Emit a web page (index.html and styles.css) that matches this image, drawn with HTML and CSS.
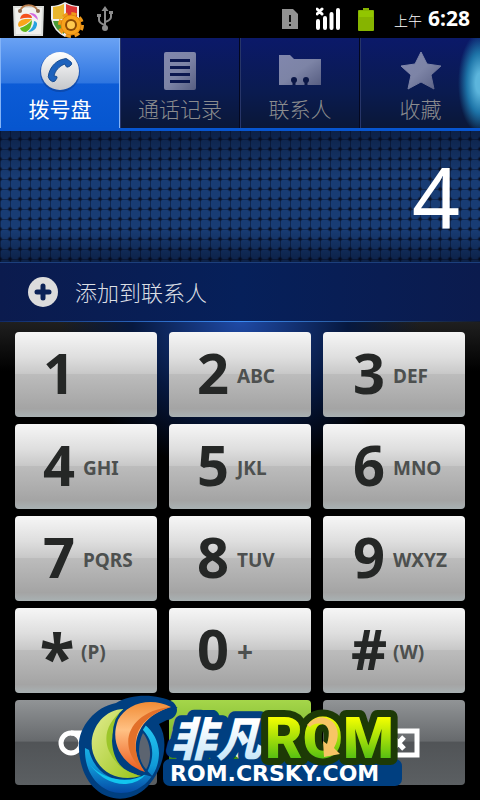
FILE: index.html
```html
<!DOCTYPE html>
<html lang="zh-CN">
<head>
  <meta charset="UTF-8">
  <meta name="viewport" content="width=device-width, initial-scale=1">
  <title>拨号盘</title>
  <link rel="stylesheet" href="styles.css">
</head>
<body>
  <header class="statusbar">
    <div class="status-left">
      <svg width="34" height="36" viewBox="0 0 34 36" aria-hidden="true">
        <path d="M1 5H32L31 35H2Z" fill="#dcdedb"/>
        <path d="M3 7H30L29 33H4Z" fill="#f1f1ee"/>
        <path d="M8 11C9 2 24 2 26 11" fill="none" stroke="#b57b4b" stroke-width="2"/>
        <circle cx="8" cy="10" r="2" fill="#8c6a50"/><circle cx="26" cy="10" r="2" fill="#8c6a50"/>
        <path d="M8 18Q9 12 16 13Q20 14 20 17Q14 16 8 18Z" fill="#f4511e"/>
        <path d="M17 12Q25 11 26 19Q22 15 17 12Z" fill="#d36ae0"/>
        <path d="M6 24Q6 19 13 18L20 18Q15 24 7 26Z" fill="#f9a51a"/>
        <path d="M20 19Q20 28 14 31Q9 31 8 27Q15 25 20 19Z" fill="#61b91d"/>
        <path d="M22 20Q27 21 24 27Q21 31 16 31Q22 26 22 20Z" fill="#27a2e0"/>
      </svg>
      <svg width="36" height="37" viewBox="0 0 36 37" aria-hidden="true">
        <path d="M15 1Q22 5 29 5V18Q27 30 15 36Q3 30 1 18V5Q8 5 15 1Z" fill="#eee"/>
        <path d="M14 3V18H3V6Q9 6 14 3Z" fill="#e9b52c"/>
        <path d="M16 3Q22 6 27 6V18H16Z" fill="#dc3434"/>
        <path d="M3 20H14V33Q5 29 3 20Z" fill="#4b9b38"/>
        <circle cx="21" cy="24" r="11" fill="none" stroke="#f09a1a" stroke-width="4" stroke-dasharray="5 3.640"/>
        <circle cx="21" cy="24" r="10" fill="#f7a21b" stroke="#e0850d"/>
        <circle cx="21" cy="24" r="6" fill="#8c4a05"/><circle cx="21" cy="24" r="4" fill="#ffc94e"/>
      </svg>
      <svg class="usb" width="18" height="26" viewBox="0 0 18 26" fill="none" stroke="#8d8d8d" stroke-width="2" aria-hidden="true">
        <path d="M9 4V22M9 19Q3 17 3 14V10M9 16Q15 14 15 11V7"/>
        <path d="M5.500 5L9 0L12.500 5ZM1 8H5V11H1ZM13 5H17V8H13Z" fill="#8d8d8d" stroke="none"/>
        <circle cx="9" cy="22" r="3" fill="#8d8d8d" stroke="none"/>
      </svg>
    </div>
    <div class="status-right">
      <svg width="16" height="20" viewBox="0 0 16 20" aria-hidden="true">
        <path d="M0 0H11L16 5V20H0Z" fill="#929292"/><path d="M8 6V13M8 15V17" stroke="#111" stroke-width="2"/>
      </svg>
      <svg width="24" height="24" viewBox="0 0 24 24" stroke="#fff" stroke-linecap="round" aria-hidden="true">
        <path d="M2 14V21M9 11V21M15.500 7V21M22 3V21" stroke-width="4"/><path d="M1 2L6 7M6 2L1 7" stroke-width="3"/>
      </svg>
      <svg width="16" height="24" viewBox="0 0 16 24" aria-hidden="true">
        <path d="M5 1H11V3H15Q16 3 16 4V23Q16 24 15 24H1Q0 24 0 23V4Q0 3 1 3H5Z" fill="#86b400"/><path d="M1 4H15V10H1Z" fill="#92c600"/>
      </svg>
      <div class="clock"><span class="ampm">上午</span> <time>6:28</time></div>
    </div>
  </header>

  <nav class="tabs">
    <a href="#dial" class="tab active">
      <svg width="42" height="42" viewBox="0 0 42 42" aria-hidden="true">
        <defs><linearGradient id="silver" x2="0" y2="1"><stop stop-color="#fff"/><stop offset="1" stop-color="#c4c6ca"/></linearGradient></defs>
        <circle cx="21" cy="22" r="20" fill="#0c3f97" opacity=".6"/>
        <circle cx="21" cy="21" r="19" fill="url(#silver)"/>
        <path d="M28 9L32 12Q34 14 31 16L29 17Q27 18 26 14C20 16 16 21 15 26Q19 26 18 28L16 31Q14 33 11 30Q8 27 10 23C12 16 18 10 25 9Q27 8 28 9Z" fill="#1d62bd" stroke="#174c91"/>
      </svg>
      <span>拨号盘</span>
    </a>
    <a href="#log" class="tab">
      <svg width="42" height="42" viewBox="0 0 42 42" aria-hidden="true">
        <defs><linearGradient id="steel" x2="1" y2="1"><stop stop-color="#8187ad"/><stop offset=".5" stop-color="#7d84a6"/><stop offset="1" stop-color="#575e82"/></linearGradient></defs>
        <rect x="5" y="2" width="32" height="38" rx="2" fill="url(#steel)"/>
        <path d="M11 10.500H31M11 17.500H31M11 24.500H31M11 31.500H31" stroke="#0b174f" stroke-width="3"/>
      </svg>
      <span>通话记录</span>
    </a>
    <a href="#contacts" class="tab">
      <svg width="44" height="42" viewBox="0 0 44 42" aria-hidden="true">
        <path d="M1 5H12L16 9H43V35H1Z" fill="url(#steel)"/>
        <circle cx="16" cy="30" r="3" fill="#0b1747"/><circle cx="28" cy="30" r="3" fill="#0b1747"/>
        <path d="M16 30V35M28 30V35" stroke="#0b1747" stroke-width="3"/>
      </svg>
      <span>联系人</span>
    </a>
    <a href="#favorites" class="tab glow">
      <svg width="42" height="42" viewBox="0 0 42 42" aria-hidden="true">
        <path d="M21 2L27 14L41 16L31 25L34 39L21 32L8 39L11 25L1 16L15 14Z" fill="url(#steel)" stroke="url(#steel)" stroke-linejoin="round"/>
      </svg>
      <span>收藏</span>
    </a>
  </nav>

  <main>
    <output class="display">4</output>
    <button class="add-contact">
      <svg width="32" height="32" viewBox="0 0 32 32" aria-hidden="true">
        <circle cx="16" cy="16" r="15" fill="#dcdcdc"/><path d="M16 10V22M10 16H22" stroke="#0b2257" stroke-width="5" stroke-linecap="round"/>
      </svg>
      <span>添加到联系人</span>
    </button>

    <div class="keypad">
      <button class="key"><b>1</b></button>
      <button class="key"><b>2</b><span>ABC</span></button>
      <button class="key"><b>3</b><span>DEF</span></button>
      <button class="key"><b>4</b><span>GHI</span></button>
      <button class="key"><b>5</b><span>JKL</span></button>
      <button class="key"><b>6</b><span>MNO</span></button>
      <button class="key"><b>7</b><span>PQRS</span></button>
      <button class="key"><b>8</b><span>TUV</span></button>
      <button class="key"><b>9</b><span>WXYZ</span></button>
      <button class="key star"><b>*</b><span>(P)</span></button>
      <button class="key"><b>0</b><span class="plus">+</span></button>
      <button class="key"><b>#</b><span>(W)</span></button>
      <button class="key dark" aria-label="语音信箱">
        <svg width="56" height="32" viewBox="0 0 56 32" fill="none" stroke="#fff" stroke-width="5" aria-hidden="true">
          <circle cx="13" cy="16" r="10"/><circle cx="43" cy="16" r="10"/><path d="M13 6H43"/>
        </svg>
      </button>
      <button class="key call" aria-label="呼叫">
        <svg width="48" height="48" viewBox="0 0 48 48" aria-hidden="true"><path d="M10 6L18 14L14 20Q19 30 29 34L34 29L43 37L36 44C20 42 5 26 5 12Z" fill="#e9f4dc"/></svg>
      </button>
      <button class="key dark" aria-label="删除">
        <svg width="52" height="32" viewBox="0 0 52 32" fill="none" stroke="#fff" stroke-width="5" aria-hidden="true">
          <path d="M49 4V28H18L5 16L18 4Z"/><path d="M25 10L36 22M36 10L25 22"/>
        </svg>
      </button>

      <svg class="watermark" width="328" height="106" viewBox="0 0 328 106" role="img" aria-label="非凡ROM ROM.CRSKY.COM">
        <defs>
          <linearGradient id="green" x2="0" y2="1"><stop offset=".2" stop-color="#f4ff00"/><stop offset=".8" stop-color="#56bf12"/></linearGradient>
          <linearGradient id="ice" x2="0" y2="1"><stop offset=".3" stop-color="#fff"/><stop offset="1" stop-color="#b9e1f8"/></linearGradient>
          <linearGradient id="lime" x2="1" y2="1"><stop stop-color="#e3ec90"/><stop offset="1" stop-color="#9ac51b"/></linearGradient>
          <linearGradient id="orange" x2="0" y2="1"><stop stop-color="#f28c35"/><stop offset=".4" stop-color="#ffc184"/><stop offset="1" stop-color="#ec5a1c"/></linearGradient>
          <linearGradient id="aqua" x2="0" y2="1"><stop stop-color="#25c9f2"/><stop offset=".6" stop-color="#109ad8"/><stop offset="1" stop-color="#064aa5"/></linearGradient>
        </defs>
        <path d="M94 71H319V84H94Z" fill="#003f80" stroke="#003f80" stroke-width="14" stroke-linejoin="round"/>
        <path d="M3 54C1 34 18 12 40 8C56 -2 82 -1 97 7C105 14 100 24 91 25L83 29C96 50 84 84 65 97C40 114 5 98 3 54Z" fill="#003f80"/>
        <path d="M67 38C76 49 76 67 69 76C62 65 61 50 67 38Z" fill="#5c6470"/>
        <path d="M9 53C8 81 26 98 45 98C66 98 83 80 83 58Q82 40 68 29L65 33C79 46 79 64 70 79C52 93 20 85 13 55Z" fill="url(#aqua)"/>
        <path d="M14 70Q30 90 50 89Q63 88 70 79C54 89 29 86 14 70Z" fill="#12c5ee"/>
        <path d="M48 14C26 14 11 38 17 58C24 79 44 87 65 81C46 76 34 65 33 46Q34 26 48 14Z" fill="url(#lime)"/>
        <path d="M48 14C31 27 27 42 33 56Q42 76 65 81C46 78 37 65 36 46Q37 27 48 14Z" fill="#9cc62a"/>
        <path d="M95 12C74 1 50 9 42 25C33 49 47 70 69 77C54 61 54 24 95 12Z" fill="url(#orange)" stroke="#003f80" stroke-width="5" paint-order="stroke"/>
        <path d="M95 12C52 16 38 52 69 77C54 56 53 25 95 12Z" fill="#e2702a"/>
        <text x="94" y="61" class="wm-cn">非凡</text>
        <text x="189" y="63" class="wm-rom">ROM</text>
        <path d="M231 30Q243 16 257 27Q266 38 258 53L264 59L248 62L247 46L251 49Q256 32 247 29Q238 27 234 32Z" fill="#f7c565"/>
        <text x="94" y="86" class="wm-url">ROM.CRSKY.COM</text>
      </svg>
    </div>
  </main>
</body>
</html>
```

FILE: styles.css
```css
* {
  box-sizing: border-box;
}

body {
  margin: 0;
  background: #000;
  color: #fff;
  font-family: "Noto Sans", "Noto Sans CJK SC", sans-serif;
}

svg {
  display: block;
}

button {
  border: none;
  font-family: inherit;
  cursor: pointer;
}

.statusbar {
  height: 38px;
  display: flex;
  justify-content: space-between;
  align-items: center;
  padding: 0 10px 0 12px;
}

.status-left {
  display: flex;
  align-items: center;
  gap: 4px;
}

.usb {
  margin-left: 6px;
}

.status-right {
  display: flex;
  align-items: center;
  gap: 18px;
}

.clock {
  display: flex;
  align-items: baseline;
  gap: 6px;
  margin-left: 2px;
  font-size: 21px;
  line-height: 28px;
  font-weight: bold;
}

.ampm {
  font-size: 14px;
  font-weight: 300;
}

.tabs {
  display: grid;
  grid-template-columns: repeat(4, 1fr);
  border-bottom: 3px solid #0755cf;
}

.tab {
  height: 90px;
  display: flex;
  flex-direction: column;
  align-items: center;
  padding-top: 12px;
  gap: 4px;
  border-left: 1px solid #273568;
  border-right: 1px solid #03071f;
  background: linear-gradient(#0b1969, #0a1b50 60%, #0a1737);
  color: #8b8c8e;
  font-size: 21px;
  line-height: 26px;
  font-weight: 300;
  text-decoration: none;
}

.tab.active {
  background: linear-gradient(#6aa2f4, #2e75e0 50%, #0c5bd6 51%, #0656cf);
  border-color: #83b3f7;
  color: #fff;
  font-weight: 400;
}

.tab.glow {
  border-right: none;
  background: radial-gradient(ellipse 22px 50px at 100% 50%, #5cb5dc 20%, #1d74a8 60%, transparent), linear-gradient(#0b1969, #0a1b50 60%, #0a1737);
}

.display {
  height: 131px;
  display: flex;
  align-items: center;
  justify-content: flex-end;
  padding: 0 20px 0 0;
  background:
    linear-gradient(rgba(0, 5, 25, 0.5), transparent 35%, transparent 75%, rgba(0, 5, 25, 0.5)),
    radial-gradient(circle, #0a1226 1px, rgba(10, 18, 38, 0.3) 2px, transparent 3px) 5px 3px / 10px 10px,
    linear-gradient(90deg, #102750 1px, transparent 1px) 0 0 / 10px 10px,
    linear-gradient(#102750 1px, transparent 1px) 0 8px / 10px 10px,
    #183c74;
  font-size: 84px;
  line-height: 100px;
}

.add-contact {
  width: 100%;
  height: 59px;
  display: flex;
  align-items: center;
  gap: 16px;
  padding: 0 27px;
  border-top: 1px solid #1c3f7c;
  background: linear-gradient(90deg, #0b1b4e, #06205a 50%, #0b1b4e);
  color: #dcdfe4;
  font-size: 22px;
  line-height: 30px;
  font-weight: 300;
}

.keypad {
  position: relative;
  display: grid;
  grid-template-columns: repeat(3, 1fr);
  gap: 7px 12px;
  padding: 11px 15px 16px;
  background: linear-gradient(90deg, #102a66, #3b8cf5 50%, #111a30) top / 100% 1px no-repeat, radial-gradient(ellipse 180px 150px at 50% 0, #1f4aa6, #06183f 60%, transparent), linear-gradient(#202020, #000 50px);
}

.key {
  height: 85px;
  display: flex;
  align-items: center;
  gap: 6px;
  padding: 0 0 0 26px;
  border-radius: 4px;
  background: linear-gradient(#f6f6f6, #dedede 30%, #c8c8c8 49%, #bcbcbc 50%, #a4a4a4 90%, #a9b1b3);
  color: #4d504f;
  font-size: 19px;
  font-weight: bold;
}

.key:nth-child(3n) {
  padding-left: 28px;
}

.key b {
  width: 36px;
  display: flex;
  justify-content: center;
  padding-bottom: 6px;
  color: #252726;
  font-size: 56px;
  line-height: 80px;
  font-weight: 700;
}

.key span {
  padding-top: 2px;
}

.key .plus {
  font-size: 28px;
  padding: 0;
}

.key.star {
  padding-left: 24px;
}

.star b {
  padding: 12px 0 0;
  font-size: 64px;
}

.key.dark,
.key.call {
  justify-content: center;
  padding: 0;
}

.dark {
  background: linear-gradient(#919496, #676a6d 48%, #515457 50%, #5b5f62);
}

.call {
  background: linear-gradient(#a5d64a, #79b52c 48%, #3f8b13 50%, #3d8d16);
}

/* logo stamp over the bottom row */
.watermark {
  position: absolute;
  left: 50%;
  bottom: 0;
  margin-left: -164px;
  pointer-events: none;
}

.wm-cn,
.wm-rom {
  paint-order: stroke;
  stroke-width: 14px;
  stroke-linejoin: round;
}

.wm-cn {
  font: italic 900 46px "Noto Sans CJK SC", sans-serif;
  fill: url(#ice);
  stroke: #003f80;
}

.wm-rom {
  font: 900 58px Roboto, sans-serif;
  fill: url(#green);
  stroke: #1d3a06;
}

.wm-url {
  font: bold 22px "DejaVu Sans", sans-serif;
  fill: #fff;
}
```
